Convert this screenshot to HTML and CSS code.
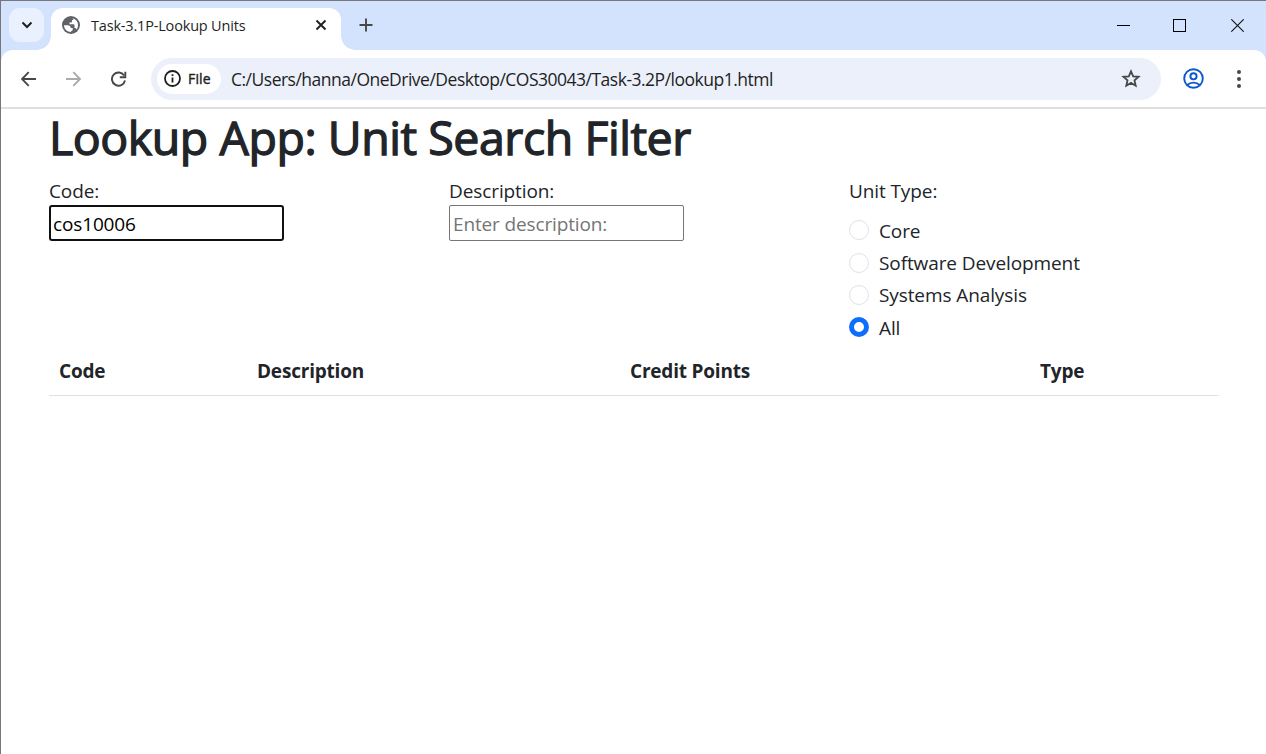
FILE: index.html
```html
<!DOCTYPE html>
<html lang="en">
<head>
<meta charset="utf-8">
<title>Task-3.1P-Lookup Units</title>
<link rel="stylesheet" href="styles.css">
</head>
<body>
<div class="window">
  <header class="tabstrip">
    <div class="tab-search"><svg width="12" height="8" viewBox="0 0 12 8"><path d="M1.500 1.500 6 6l4.500-4.500" fill="none" stroke="#1f1f1f" stroke-width="2"/></svg></div>
    <div class="tab">
      <svg class="globe" width="18" height="18" viewBox="0 0 18 18"><circle cx="9" cy="9" r="9" fill="#5f6368"/><path d="M2 9.300h3.700c1.900 0 3 1 3 2.700h2v2.200c-.6.4-1.700.4-1.700 1.800C5.500 16 2 13.300 2 9.300Z" fill="#fff"/><path d="M10.500 2.200C14 3 16 5.500 16 9c0 1.800-.5 3.300-1.500 4.500-.4-.9-1-1.400-2-1.400V9.500c0-.7-.4-1.200-1.200-1.200H7.500V6.500h1.300c.8 0 1.200-.4 1.200-1.200V4h1.300c0-.8-.2-1.300-.8-1.800Z" fill="#fff"/></svg>
      <span class="tab-title">Task-3.1P-Lookup Units</span>
      <svg class="tab-close" width="12" height="12" viewBox="0 0 12 12"><path d="m1.500 1.500 9 9m0-9-9 9" stroke="#1f1f1f" stroke-width="1.900"/></svg>
    </div>
    <svg class="new-tab" width="14" height="14" viewBox="0 0 14 14"><path d="M7 .5v13M.5 7h13" stroke="#474747" stroke-width="1.900"/></svg>
    <div class="controls">
      <svg width="13" height="13" viewBox="0 0 13 13"><path d="M0 6.500h13" stroke="#000"/></svg>
      <svg width="13" height="13" viewBox="0 0 13 13"><rect x=".5" y=".5" width="12" height="12" fill="none" stroke="#000"/></svg>
      <svg width="13" height="13" viewBox="0 0 13 13"><path d="m.3.3 12.400 12.400m0-12.400L.3 12.700" stroke="#111" stroke-width="1.100"/></svg>
    </div>
  </header>
  <nav class="toolbar">
    <svg class="back" width="16" height="16" viewBox="0 0 16 16"><path d="M15 8H1.200M7.700 1.200 1 8l6.700 6.800" fill="none" stroke="#474747" stroke-width="1.900"/></svg>
    <svg class="forward" width="16" height="16" viewBox="0 0 16 16"><path d="M0 8h13.800M7.300 1.200 14 8l-6.700 6.800" fill="none" stroke="#ababab" stroke-width="1.900"/></svg>
    <svg class="reload" width="16" height="16" viewBox="0 0 16 16"><path d="M13.100 4.500A6.600 6.600 0 1 0 14 9.500" fill="none" stroke="#474747" stroke-width="1.900"/><path d="M14.300.7v5.500H8.800" fill="none" stroke="#474747" stroke-width="1.900"/></svg>
    <div class="address">
      <div class="chip"><svg width="17" height="17" viewBox="0 0 17 17"><circle cx="8.500" cy="8.500" r="7.500" fill="none" stroke="#1f1f1f" stroke-width="1.800"/><path d="M8.500 7.600v5M8.500 4.200v1.900" stroke="#1f1f1f" stroke-width="1.800"/></svg><span>File</span></div>
      <span class="url">C:/Users/hanna/OneDrive/Desktop/COS30043/Task-3.2P/lookup1.html</span>
      <svg class="star" width="20" height="19" viewBox="0 0 20 19"><path d="m10 2.300 2.200 5 5.400.5-4.100 3.600 1.200 5.300-4.700-2.800-4.700 2.800 1.200-5.300-4.100-3.600 5.400-.5Z" fill="none" stroke="#474747" stroke-width="1.800"/></svg>
    </div>
    <svg class="profile" width="21" height="21" viewBox="0 0 21 21" fill="none" stroke="#0b57d0" stroke-width="1.900"><circle cx="10.500" cy="10.500" r="9.300"/><circle cx="10.500" cy="8.300" r="3.100"/><path d="M4.200 17c3.500-3.200 9.100-3.200 12.600 0"/></svg>
    <svg class="menu" width="4" height="18" viewBox="0 0 4 18" fill="#474747"><circle cx="2" cy="2" r="2"/><circle cx="2" cy="9" r="2"/><circle cx="2" cy="16" r="2"/></svg>
  </nav>
  <main class="page">
    <h1>Lookup App: Unit Search Filter</h1>
    <section class="filters">
      <label class="field"><span>Code:</span><input class="active" type="text" value="cos10006"></label>
      <label class="field"><span>Description:</span><input type="text" placeholder="Enter description:"></label>
      <div class="field">
        <span>Unit Type:</span>
        <div class="options">
          <label><i class="radio"></i><span>Core</span></label>
          <label><i class="radio"></i><span>Software Development</span></label>
          <label><i class="radio"></i><span>Systems Analysis</span></label>
          <label><i class="radio on"></i><span>All</span></label>
        </div>
      </div>
    </section>
    <div class="table-head"><span>Code</span><span>Description</span><span>Credit Points</span><span>Type</span></div>
  </main>
</div>
</body>
</html>
```

FILE: styles.css
```css
* { box-sizing: border-box; }
body { margin: 0; background: #fff; color: #212529; font-family: "Open Sans", "Noto Sans", sans-serif; }
svg { display: block; flex: none; }
.window { height: 754px; border-top: 1px solid #777; border-left: 1px solid #777; overflow: hidden; background: linear-gradient(#d3e3fd 80px, #fff 80px); }
.tabstrip { height: 49px; display: flex; align-items: flex-start; padding: 7px 0 0 8px; }
.tab-search { width: 35px; height: 34px; border-radius: 11px; background: #eaf1fe; display: flex; align-items: center; justify-content: center; }
.tab { position: relative; width: 290px; height: 42px; margin-left: 7px; background: #fff; border-radius: 12px 12px 0 0; display: flex; align-items: flex-start; padding: 8px 14px 0 11px; }
.tab::before, .tab::after { content: ""; position: absolute; bottom: 0; width: 14px; height: 14px; }
.tab::before { left: -14px; background: radial-gradient(circle at 0 0, transparent 13.5px, #fff 14px); }
.tab::after { right: -14px; background: radial-gradient(circle at 100% 0, transparent 13.5px, #fff 14px); }
.tab-title { margin-left: 11px; font-size: 14.500px; line-height: 19px; letter-spacing: -.18px; color: #1f1f1f; flex: 1; white-space: nowrap; }
.tab-close { margin-top: 3px; }
.new-tab { margin: 10px 0 0 18px; }
.controls { margin: 11px 22px 0 auto; display: flex; gap: 44px; }
.controls svg:nth-child(2) { margin: 0 1px 0 -1px; }
.toolbar { height: 59px; background: #fff; border-bottom: 2px solid #dfdfdf; display: flex; align-items: center; padding: 0 25px 0 20px; border-radius: 12px 12px 0 0; }
.forward { margin-left: 29px; }
.reload { margin-left: 29px; }
.address { margin-left: 24px; width: 1011px; height: 42px; border-radius: 21px; background: #ebf0fa; display: flex; align-items: center; padding: 0 20px 0 6px; }
.chip { width: 64px; height: 30px; border-radius: 15px; background: #fff; display: flex; align-items: center; gap: 7px; padding-left: 7px; font-size: 14px; color: #1f1f1f; -webkit-text-stroke: .4px #1f1f1f; letter-spacing: .15px; }
.url { flex: 1; margin-left: 10px; font-size: 17.500px; letter-spacing: -.5px; color: #1f1f1f; white-space: nowrap; }
.profile { margin-left: 22px; }
.menu { margin-left: 33px; }
.page { background: #fff; padding: 0 47px 0 48px; height: 646px; }
h1 { margin: 0; height: 69px; font-size: 46.500px; line-height: 57px; font-weight: 400; -webkit-text-stroke: 1.300px #212529; letter-spacing: -.46px; white-space: nowrap; }
.filters { display: grid; grid-template-columns: 400px 400px 1fr; height: 169px; font-size: 19px; line-height: 26px; letter-spacing: -.1px; }
.field { display: flex; flex-direction: column; align-items: flex-start; }
.field input { margin-top: 1px; width: 235px; height: 36px; border: 1px solid #767676; border-radius: 2px; padding: 2px 3px 0; font: inherit; letter-spacing: -.14px; color: #000; outline: 0; }
.field input.active { border: 2px solid #101010; border-radius: 3px; padding: 2px 2px 0; }
.field input::placeholder { color: #757575; opacity: 1; }
.options { padding-top: 10px; }
.options label { display: flex; align-items: center; height: 32.400px; gap: 10px; white-space: nowrap; }
.options label span { padding-top: 1px; }
.radio { width: 20px; height: 20px; border: 1px solid #dee2e6; border-radius: 50%; background: #fff; }
.radio.on { border: 5px solid #0d6efd; }
.table-head { display: grid; grid-template-columns: 198px 373px 410px 1fr; height: 49px; padding: 11px 0 0 10px; border-bottom: 1px solid #dee2e6; font-size: 19px; line-height: 26px; font-weight: 700; letter-spacing: -.2px; }
```
